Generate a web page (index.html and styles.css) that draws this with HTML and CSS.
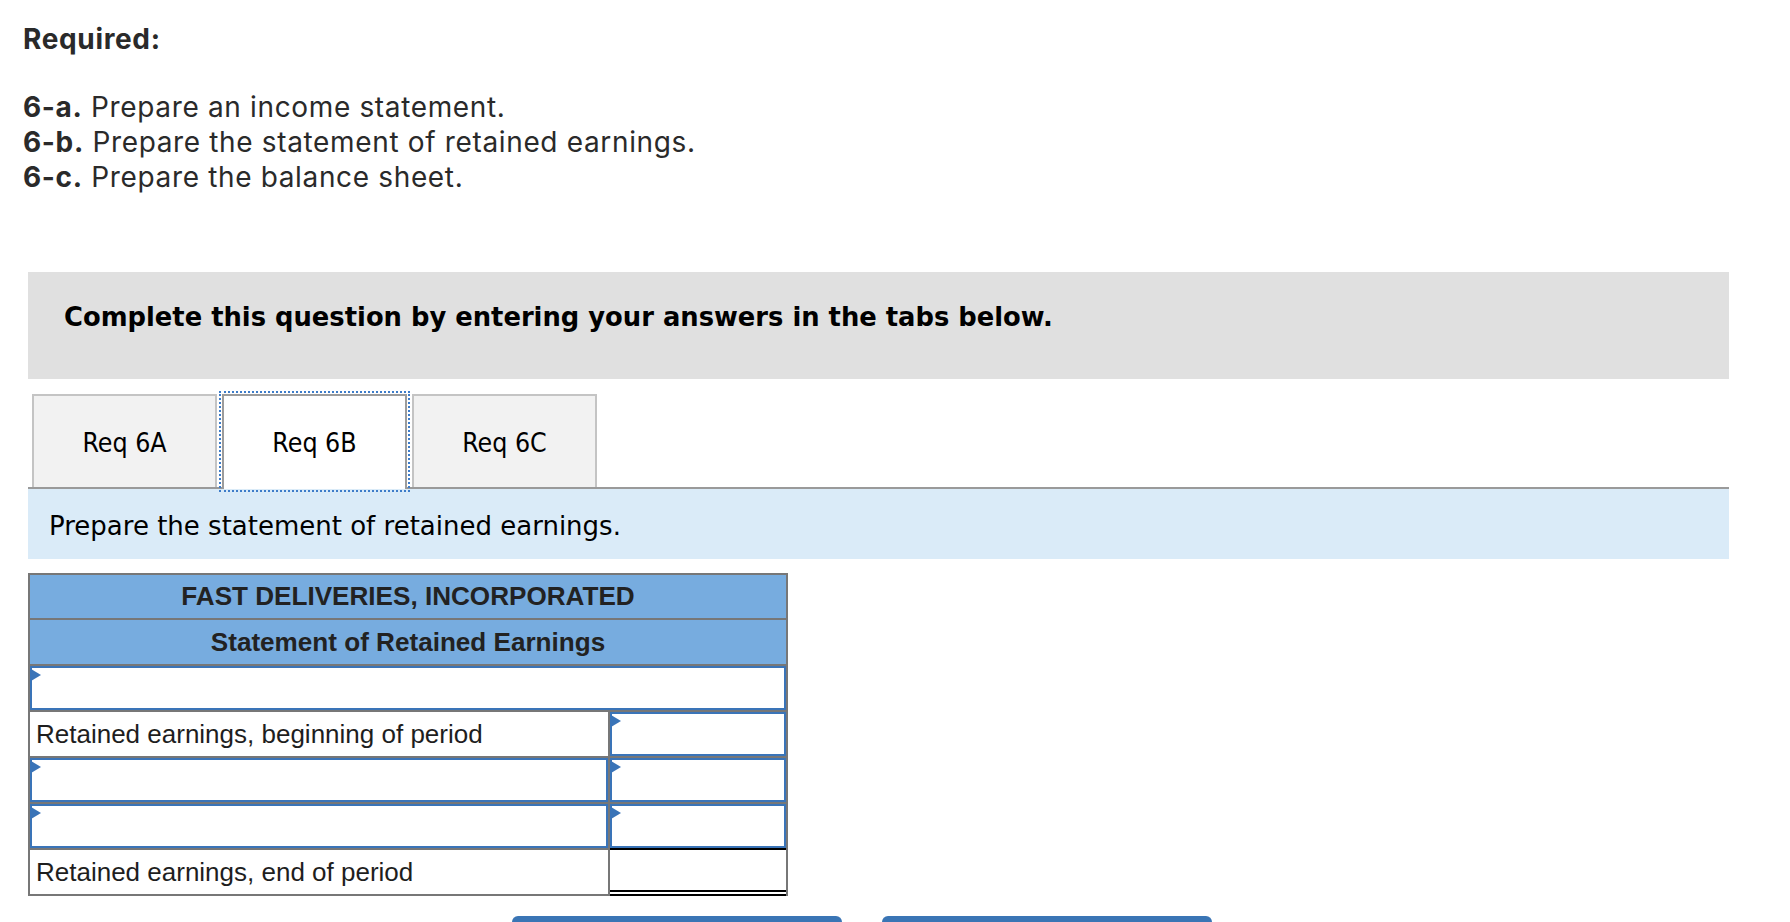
FILE: index.html
```html
<!DOCTYPE html>
<html lang="en">
<head>
<meta charset="utf-8">
<title>Required</title>
<link rel="stylesheet" href="styles.css">
</head>
<body>
<div class="intro">
  <p class="req-title">Required:</p>
  <p class="part"><b>6-a.</b> Prepare an income statement.</p>
  <p class="part"><b>6-b.</b> Prepare the statement of retained earnings.</p>
  <p class="part"><b>6-c.</b> Prepare the balance sheet.</p>
</div>

<div class="question">
  <div class="instruct">Complete this question by entering your answers in the tabs below.</div>

  <div class="tabs">
    <div class="tab">Req 6A</div>
    <div class="tab active">Req 6B</div>
    <div class="tab">Req 6C</div>
  </div>

  <div class="panel">Prepare the statement of retained earnings.</div>

  <div class="stmt">
    <div class="hd span">FAST DELIVERIES, INCORPORATED</div>
    <div class="hd span">Statement of Retained Earnings</div>
    <div class="cell span"><div class="inp"></div></div>
    <div class="cell label">Retained earnings, beginning of period</div>
    <div class="cell"><div class="inp"></div></div>
    <div class="cell"><div class="inp"></div></div>
    <div class="cell"><div class="inp"></div></div>
    <div class="cell"><div class="inp"></div></div>
    <div class="cell"><div class="inp"></div></div>
    <div class="cell label">Retained earnings, end of period</div>
    <div class="cell total"></div>
  </div>

  <div class="nav">
    <div class="btn" aria-label="Previous: Req 6A"></div>
    <div class="btn" aria-label="Next: Req 6C"></div>
  </div>
</div>
</body>
</html>
```

FILE: styles.css
```css
* { box-sizing: border-box; }

body {
  margin: 0;
  background: #ffffff;
  font-family: "DejaVu Sans", sans-serif;
}

.intro {
  padding: 22px 0 0 23px;
  font-family: Inter, "Open Sans", sans-serif;
  font-size: 28px;
  letter-spacing: 0.65px;
  line-height: 35px;
  color: #2a2a2a;
}

.intro p { margin: 0; }

.req-title {
  font-weight: 700;
  margin-bottom: 33px !important;
}

.part b { font-weight: 700; }

.question {
  margin: 77px 0 0 28px;
  width: 1701px;
}

.instruct {
  height: 107px;
  background: #e0e0e0;
  padding: 30px 0 0 36px;
  font-family: "DejaVu Sans", sans-serif;
  font-weight: 700;
  font-size: 25.8px;
  line-height: 30px;
  color: #000;
}

.tabs {
  margin-top: 15px;
  display: flex;
  gap: 5px;
  padding-left: 4px;
  border-bottom: 2px solid #9a9a9a;
  height: 95px;
}

.tab {
  width: 185px;
  height: 93px;
  display: flex;
  align-items: center;
  justify-content: center;
  background: #f2f2f2;
  border: 2px solid #c4c4c4;
  border-bottom: none;
  font-family: "DejaVu Sans", sans-serif;
  font-stretch: condensed;
  font-size: 26.5px;
  color: #000;
  padding-top: 2px;
}

.tab.active {
  height: 95px;
  background: #ffffff;
  border-color: #9c9c9c;
  outline: 2px dotted #3d7cc9;
  outline-offset: 1px;
  padding-top: 0;
}

.panel {
  height: 70px;
  background: #daebf8;
  padding: 22px 0 0 21px;
  font-family: "DejaVu Sans", sans-serif;
  font-size: 26px;
  line-height: 30px;
  color: #000;
}

.stmt {
  margin-top: 14px;
  width: 760px;
  display: grid;
  grid-template-columns: 578px 176px;
  grid-template-rows: 43px repeat(6, 44px);
  gap: 2px;
  background: #777777;
  border: 2px solid #777777;
  font-family: "Liberation Sans", Arial, sans-serif;
  font-size: 26px;
  color: #1e1e1e;
}

.span { grid-column: 1 / 3; }

.hd {
  background: #77acdf;
  display: flex;
  align-items: center;
  justify-content: center;
  font-weight: 700;
  font-size: 26.1px;
  color: #222;
}

.cell {
  background: #ffffff;
  display: flex;
}

.label {
  align-items: center;
  padding-left: 6px;
}

.inp {
  flex: 1;
  border: 2px solid #3a74b8;
  background: #fff;
  position: relative;
}

.inp::before {
  content: "";
  position: absolute;
  top: 1px;
  left: -1px;
  width: 0;
  height: 0;
  border-top: 6px solid transparent;
  border-bottom: 6px solid transparent;
  border-left: 10px solid #3a74b8;
}

.total {
  margin: -2px 0 -2px 0;
  border-top: 2px solid #000;
  border-bottom: 6px double #000;
}

.nav {
  margin-top: 20px;
  display: flex;
  gap: 40px;
  padding-left: 484px;
}

.btn {
  width: 330px;
  height: 52px;
  background: #3a75b5;
  border-radius: 6px;
}
```
